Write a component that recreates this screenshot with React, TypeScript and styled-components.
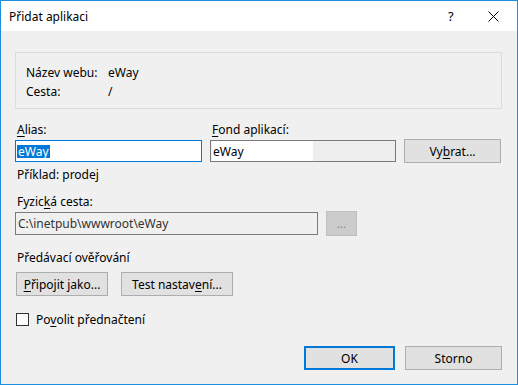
import React from 'react';
import styled, { createGlobalStyle } from 'styled-components';

const GlobalStyle = createGlobalStyle`
  html, body {
    margin: 0;
    padding: 0;
    background: #ffffff;
  }
`;

interface InfoRow {
  label: string;
  value: string;
}

const infoRows: InfoRow[] = [
  { label: 'Název webu:', value: 'eWay' },
  { label: 'Cesta:', value: '/' },
];

const App: React.FunctionComponent = (): React.ReactElement => (
  <>
    <GlobalStyle />
    <Window>
      <TitleBar>
        <Title>Přidat aplikaci</Title>
        <HelpGlyph>?</HelpGlyph>
        <CloseButton>
          <svg width="11" height="11" viewBox="0 0 11 11">
            <path d="M0.5 0.5 L10.5 10.5 M10.5 0.5 L0.5 10.5" stroke="#000" strokeWidth="1" />
          </svg>
        </CloseButton>
      </TitleBar>
      <Body>
        <InfoBox>
          {infoRows.map((row: InfoRow): React.ReactElement => (
            <React.Fragment key={row.label}>
              <InfoLabel>{row.label}</InfoLabel>
              <InfoValue>{row.value}</InfoValue>
            </React.Fragment>
          ))}
        </InfoBox>

        <FormGrid>
          <FieldLabel>
            <u>A</u>lias:
          </FieldLabel>
          <FieldLabel>
            <u>F</u>ond aplikací:
          </FieldLabel>
          <span />
          <TextBox focused>
            <Selected>eWay</Selected>
          </TextBox>
          <TextBox>
            <PoolValue>eWay</PoolValue>
          </TextBox>
          <Button width={97}>
            Vy<u>b</u>rat...
          </Button>
        </FormGrid>

        <Hint>Příklad: prodej</Hint>

        <SectionLabel>
          Fyzic<u>k</u>á cesta:
        </SectionLabel>
        <PathRow>
          <PathBox>C:\inetpub\wwwroot\eWay</PathBox>
          <BrowseButton disabled>...</BrowseButton>
        </PathRow>

        <SectionLabel gap={14}>Předávací ověřování</SectionLabel>
        <ButtonRow>
          <Button width={92}>
            <u>P</u>řipojit jako...
          </Button>
          <Button width={112}>
            Test nastav<u>e</u>ní...
          </Button>
        </ButtonRow>

        <CheckRow>
          <CheckBox />
          <span>
            Po<u>v</u>olit přednačtení
          </span>
        </CheckRow>

        <Footer>
          <Button width={91} primary>
            OK
          </Button>
          <Button width={97}>Storno</Button>
        </Footer>
      </Body>
    </Window>
  </>
);

export default App;

// Styled components

const Window = styled('div')`
  width: 518px;
  height: 385px;
  box-sizing: border-box;
  border: 1px solid #1c8fe0;
  display: flex;
  flex-direction: column;
  font-family: 'Noto Sans', 'Open Sans', sans-serif;
  font-size: 12px;
  color: #000;

  u {
    text-decoration: underline;
    text-underline-offset: 2px;
  }
`;

const TitleBar = styled('div')`
  height: 30px;
  background: #ffffff;
  display: flex;
  align-items: center;
  padding-left: 8px;
`;

const Title = styled('span')`
  flex: 1;
  font-size: 12px;
`;

const HelpGlyph = styled('span')`
  width: 14px;
  margin-right: 8px;
  font-size: 13px;
`;

const CloseButton = styled('span')`
  width: 46px;
  height: 30px;
  display: flex;
  align-items: center;
  justify-content: center;
  margin-right: 1px;
`;

const Body = styled('div')`
  flex: 1;
  background: #f0f0f0;
  display: flex;
  flex-direction: column;
  padding: 21px 15px 14px 14px;
`;

const InfoBox = styled('div')`
  height: 57px;
  box-sizing: border-box;
  border: 1px solid #dcdcdc;
  display: grid;
  grid-template-columns: 82px auto;
  align-content: start;
  padding: 10px 0 0 10px;
  line-height: 19px;
`;

const InfoLabel = styled('span')``;

const InfoValue = styled('span')``;

const FormGrid = styled('div')`
  display: grid;
  grid-template-columns: 187px 186px 97px;
  column-gap: 8px;
  row-gap: 1px;
  align-items: center;
  margin-top: 13px;
`;

const FieldLabel = styled('span')`
  line-height: 16px;
  padding-left: 2px;
`;

const TextBox = styled('div')<{ focused?: boolean }>`
  height: 22px;
  box-sizing: border-box;
  border: 1px solid ${(p) => (p.focused ? '#0078d7' : '#7a7a7a')};
  background: ${(p) => (p.focused ? '#ffffff' : '#eeeeee')};
  display: flex;
  align-items: center;
  padding-left: 1px;
`;

const Selected = styled('span')`
  background: #0078d7;
  color: #ffffff;
  line-height: 13px;
  padding: 0 1px 0 1px;
`;

const PoolValue = styled('span')`
  width: 100px;
  align-self: stretch;
  background: #ffffff;
  display: flex;
  align-items: center;
  padding-left: 1px;
`;

const Button = styled('button')<{ width: number; primary?: boolean }>`
  width: ${(p) => p.width}px;
  height: 24px;
  box-sizing: border-box;
  background: #e1e1e1;
  border: ${(p) => (p.primary ? '2px solid #0078d7' : '1px solid #adadad')};
  font-family: inherit;
  font-size: 12px;
  color: #000;
  padding: 0;
`;

const Hint = styled('div')`
  line-height: 16px;
  margin-top: 4px;
  padding-left: 2px;
`;

const SectionLabel = styled('div')<{ gap?: number }>`
  line-height: 16px;
  margin-top: ${(p) => p.gap ?? 11}px;
  padding-left: 2px;
`;

const PathRow = styled('div')`
  display: flex;
  align-items: center;
  gap: 8px;
  margin-top: 1px;
`;

const PathBox = styled('div')`
  width: 303px;
  height: 23px;
  box-sizing: border-box;
  border: 1px solid #7a7a7a;
  background: #f0f0f0;
  display: flex;
  align-items: center;
  padding-left: 2px;
  color: #333;
`;

const BrowseButton = styled('button')`
  width: 31px;
  height: 25px;
  box-sizing: border-box;
  background: #cccccc;
  border: 1px solid #bfbfbf;
  color: #838383;
  font-family: inherit;
  font-size: 11px;
  padding: 0;
`;

const ButtonRow = styled('div')`
  display: flex;
  gap: 13px;
  margin-top: 6px;
  padding-left: 1px;
`;

const CheckRow = styled('label')`
  display: flex;
  align-items: center;
  gap: 7px;
  margin-top: 15px;
  padding-left: 1px;
`;

const CheckBox = styled('span')`
  width: 13px;
  height: 13px;
  box-sizing: border-box;
  border: 1px solid #333;
  background: #ffffff;
`;

const Footer = styled('div')`
  margin-top: auto;
  display: flex;
  justify-content: flex-end;
  gap: 10px;
`;
